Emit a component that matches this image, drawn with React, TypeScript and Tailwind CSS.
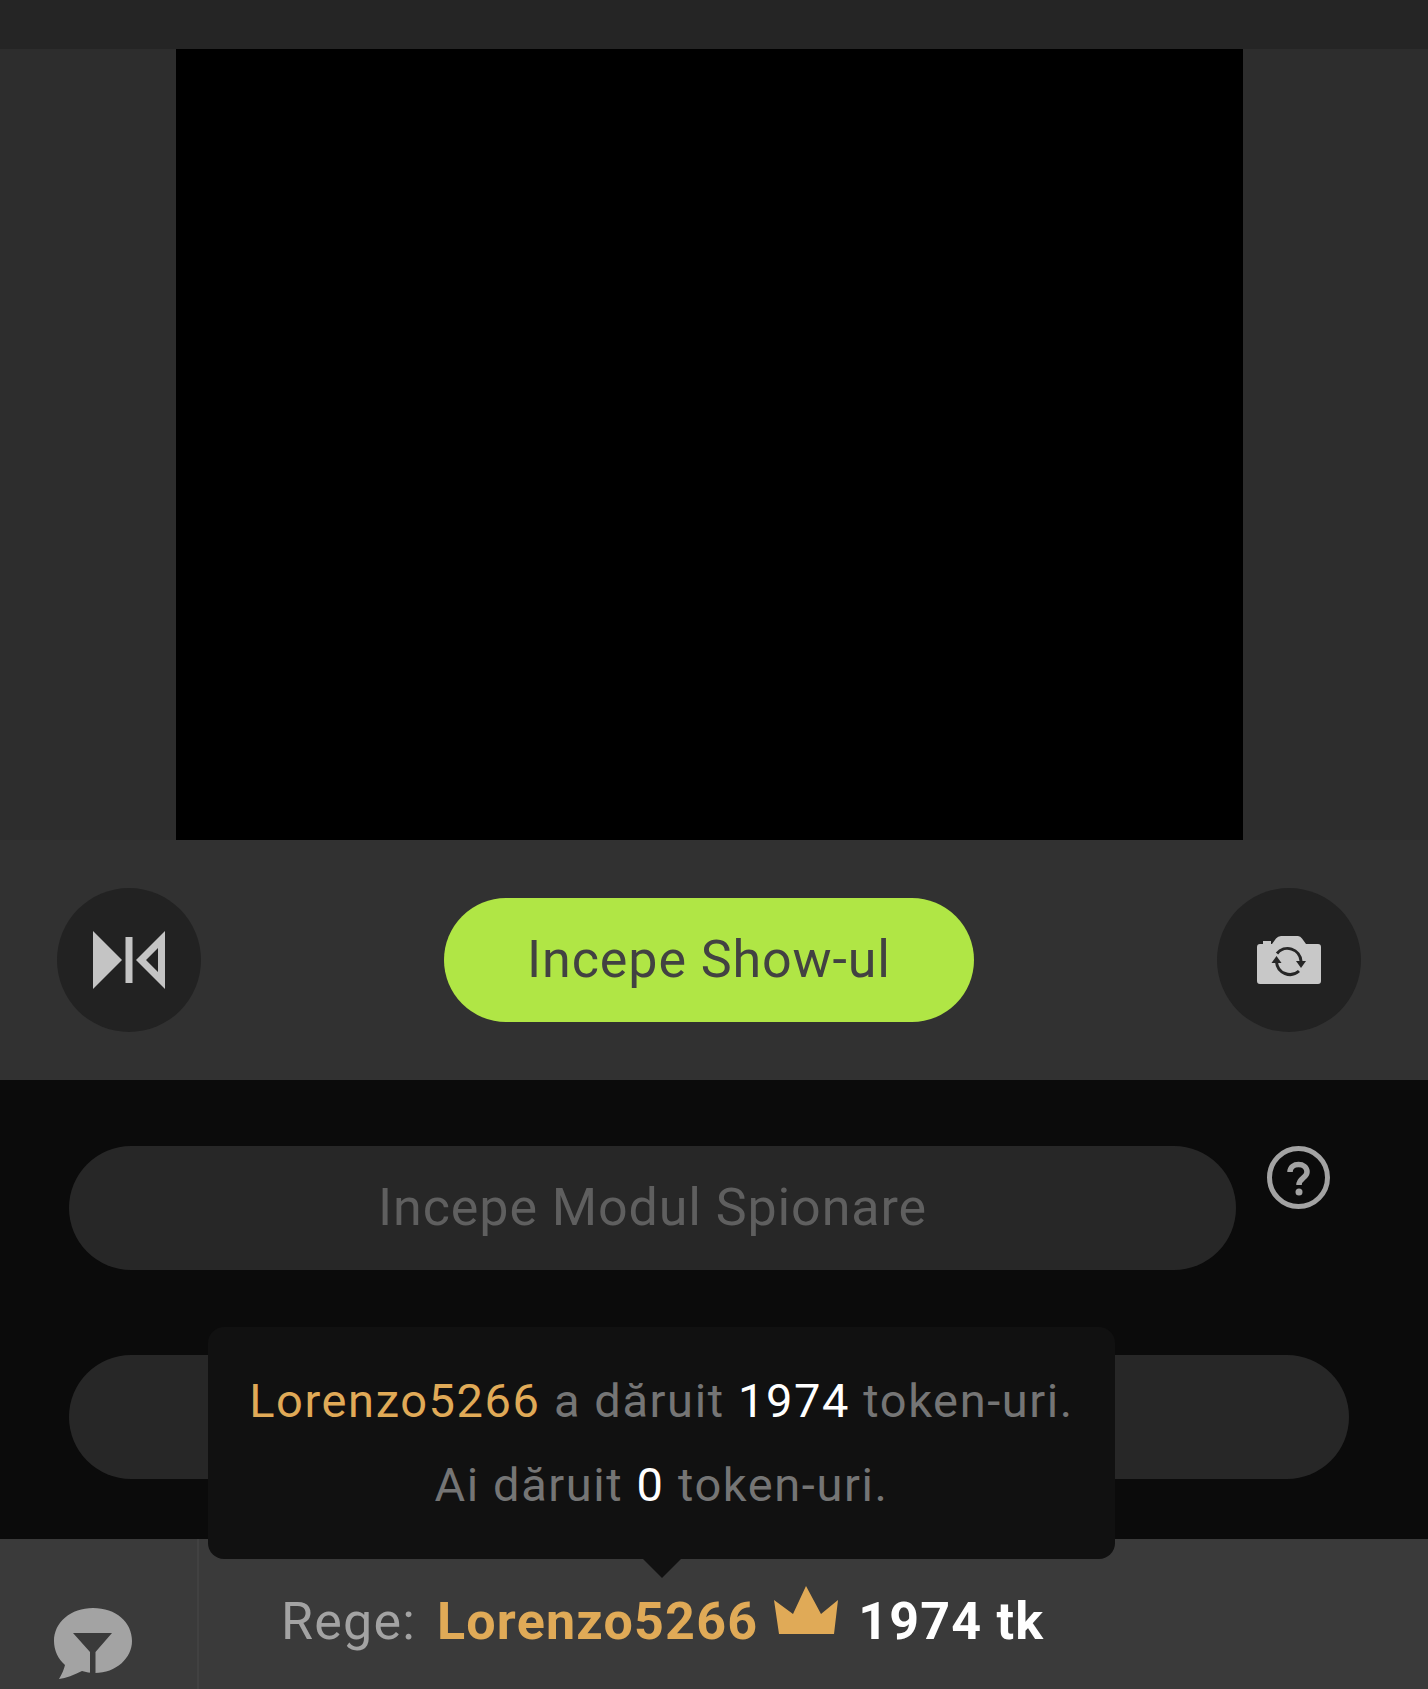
import React from 'react';

const MirrorIcon = () => (
  <svg width="72" height="58" viewBox="0 0 72 58" fill="#c4c4c4">
    <path d="M0 0 L29 29 L0 58 Z" />
    <rect x="32.500" y="6" width="7" height="46" />
    <path fillRule="evenodd" d="M72 0 V58 L43 29 Z M65 17 L53 29 L65 41 Z" />
  </svg>
);

const CameraIcon = () => (
  <svg width="64" height="48" viewBox="0 0 64 48">
    <path
      fill="#c8c8c8"
      d="M3 8 H6 V5 H14 V8 H15 L19 2.500 Q21 0 24 0 H41 Q43.500 0 45 2.500 L49 8 H61 Q64 8 64 11 V45 Q64 48 61 48 H3 Q0 48 0 45 V11 Q0 8 3 8 Z"
    />
    <path fill="none" stroke="#262626" strokeWidth="3" d="M20 17.500 A13.500 13.500 0 0 1 44 25" />
    <path fill="none" stroke="#262626" strokeWidth="3" d="M42 35 A13.500 13.500 0 0 1 19.500 26" />
    <path fill="#262626" d="M39 25 L49 25 L44 32 Z" />
    <path fill="#262626" d="M14.500 27 L24.500 27 L19.500 20 Z" />
  </svg>
);

const HelpIcon = () => (
  <svg width="63" height="63" viewBox="0 0 63 63" fill="none">
    <circle cx="31.500" cy="31.500" r="29" stroke="#a3a3a3" strokeWidth="5" />
    <path d="M23 26 C23 16 40 16 40 26 C40 32 32 32 32 39" stroke="#a3a3a3" strokeWidth="5.500" />
    <circle cx="32" cy="46" r="3.500" fill="#a3a3a3" />
  </svg>
);

const ChatFilterIcon = () => (
  <svg width="80" height="72" viewBox="0 0 80 72">
    <path
      fill="#a3a3a3"
      d="M39 0 C62 0 78 14 78 33 C78 50 62 65 41 65 C36 65 32 64 28 63 C20 67 12 70 5 71 C8 66 10 61 11 57 C4 51 0 42 0 33 C0 14 17 0 39 0 Z"
    />
    <path fill="#3a3a3a" d="M19 25 H58 L41.500 44 V65 H36 V44 Z" />
  </svg>
);

const CrownIcon = () => (
  <svg width="64" height="48" viewBox="0 0 64 48" fill="#e0aa57">
    <path d="M0 14 L19 28 L32 0 L47 28 L64 14 L60 48 H5 Z" />
  </svg>
);

export default function App() {
  return (
    <div className="relative h-[1689px] w-[1428px] overflow-hidden bg-[#0b0b0b] font-['Roboto',sans-serif]">
      {/* Top strip */}
      <div className="h-[49px] bg-[#252525]" />

      {/* Video */}
      <div className="flex h-[791px] justify-center bg-[#2d2d2d] pr-[9px]">
        <div className="w-[1067px] bg-black" />
      </div>

      {/* Controls */}
      <div className="flex h-[240px] items-center justify-between bg-[#313131] pl-[57px] pr-[67px]">
        <button className="flex h-[144px] w-[144px] items-center justify-center rounded-full bg-[#222222]">
          <MirrorIcon />
        </button>
        <button className="h-[124px] w-[530px] rounded-full bg-[#b0e645] text-[52px] tracking-[0.900px] text-[#424242]">
          Incepe Show-ul
        </button>
        <button className="flex h-[144px] w-[144px] items-center justify-center rounded-full bg-[#222222]">
          <CameraIcon />
        </button>
      </div>

      {/* Spy mode and private pills */}
      <div className="h-[459px] bg-[#0b0b0b] pl-[69px] pr-[79px] pt-[66px]">
        <div className="flex items-start gap-[31px]">
          <div className="flex h-[124px] w-[1167px] items-center justify-center rounded-full bg-[#272727] text-[52px] tracking-[0.900px] text-[#5f5f5f]">
            Incepe Modul Spionare
          </div>
          <HelpIcon />
        </div>
        <div className="mt-[85px] h-[124px] rounded-full bg-[#272727]" />
      </div>

      {/* King row */}
      <div className="flex h-[150px] bg-[#3a3a3a]">
        <div className="flex w-[199px] justify-center border-r-2 border-[#414141] pr-[10px] pt-[69px]">
          <ChatFilterIcon />
        </div>
        <div className="flex items-center pl-[82px] pt-[16px] text-[52px] tracking-[1.200px]">
          <span className="text-[#a3a3a3]">Rege:</span>
          <span className="ml-[21px] font-bold text-[#e0aa57]">Lorenzo5266</span>
          <span className="mb-[24px] ml-[16px]">
            <CrownIcon />
          </span>
          <span className="ml-[20px] font-bold text-white">1974 tk</span>
        </div>
      </div>

      {/* Tooltip */}
      <div className="absolute left-[208px] top-[1327px] flex h-[232px] w-[907px] flex-col items-center justify-center gap-[34px] rounded-[16px] bg-[#111111] text-[47px] leading-[50px] tracking-[1.600px] text-[#757575]">
        <div>
          <span className="text-[#e0aa57]">Lorenzo5266</span> a dăruit <span className="text-white">1974</span> token-uri.
        </div>
        <div>
          Ai dăruit <span className="text-white">0</span> token-uri.
        </div>
        <div className="absolute left-[435px] top-[232px] h-0 w-0 border-x-[19px] border-t-[19px] border-x-transparent border-t-[#111111]" />
      </div>
    </div>
  );
}
